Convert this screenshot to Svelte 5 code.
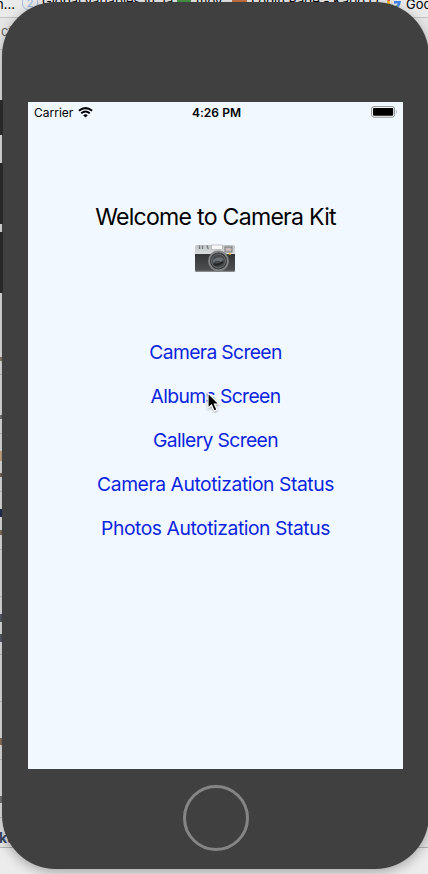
<script>
  const actions = [
    { label: 'Camera Screen', tracking: -0.65 },
    { label: 'Albums Screen', tracking: -0.6 },
    { label: 'Gallery Screen', tracking: -0.64 },
    { label: 'Camera Autotization Status', tracking: -0.44 },
    { label: 'Photos Autotization Status', tracking: -0.44 }
  ];
  const rules = [49, 374, 433, 491, 549, 596, 654, 701, 759, 817];
  const edges = [
    { y: 357, h: 4, c: '#8f8272' },
    { y: 415, h: 4, c: '#777' },
    { y: 451, h: 10, c: '#c9ab80' },
    { y: 473, h: 4, c: '#776b5f' },
    { y: 509, h: 8, c: '#263050' },
    { y: 530, h: 5, c: '#82705e' },
    { y: 614, h: 8, c: '#555b65' },
    { y: 634, h: 8, c: '#555b65' },
    { y: 738, h: 7, c: '#8b745d' },
    { y: 796, h: 7, c: '#777' }
  ];
</script>

<main class="desktop">
  <div class="browser">
    <div class="tabs"></div>
    <span class="bit" style="left:-4px;top:-4px">n...</span>
    <span class="seal">2</span>
    <span class="bit" style="left:42px;top:-7px">Global variables in Ja...</span>
    <i class="green"></i>
    <span class="bit" style="left:196px;top:-7px">moy</span>
    <i class="orange"></i>
    <span class="bit" style="left:251px;top:-7px">Login Page - Kario Q...</span>
    <svg class="google" viewBox="0 0 14 14" width="14" height="14" fill="none" stroke-width="2.5">
      <path d="M1.5 6A5.6 5.6 0 0 1 11 2.7" stroke="#ea4335" />
      <path d="M1.5 6A5.6 5.6 0 0 0 3.6 11.4" stroke="#fbbc05" />
      <path d="M3.6 11.4A5.6 5.6 0 0 0 10.5 11.2" stroke="#34a853" />
      <path d="M7 7.2H12.5Q12.2 10 10.5 11.2" stroke="#4285f4" />
    </svg>
    <span class="bit" style="left:406px;top:-4px">Goo</span>
    <span class="bit pale" style="left:1px;top:23px">ct</span>
    {#each rules as y}<i class="rule" style="top:{y}px"></i>{/each}
    {#each edges as e}<i class="edge" style="top:{e.y}px;height:{e.h}px;background:{e.c}"></i>{/each}
    <span class="bit bold" style="left:-1px;top:830px">ku</span>
    <div class="footer"></div>
  </div>

  <div class="phone">
    <div class="screen">
      <div class="status">
        <div class="left">
          <span>Carrier</span>
          <svg width="15" height="11" viewBox="0 0 15 11" fill="none" stroke="#000">
            <path d="M.9 3.8Q7.5-1.6 14.1 3.8" stroke-width="2" />
            <path d="M3.2 6.3Q7.5 2.7 11.8 6.3" stroke-width="1.8" />
            <path d="M5.2 8.2Q7.5 6.4 9.8 8.2L7.5 10.6Z" fill="#000" stroke="none" />
          </svg>
        </div>
        <strong>4:26 PM</strong>
        <svg class="battery" width="27" height="12" viewBox="0 0 27 12">
          <rect x=".6" y=".6" width="23" height="10.6" rx="2.4" fill="#fff" stroke="#8b9093" />
          <rect x="2" y="2" width="20.2" height="7.8" rx="1" />
          <path d="M25 4q1.5 1.9 0 3.8z" fill="#8b9093" />
        </svg>
      </div>

      <h1>Welcome to Camera Kit</h1>
      <svg class="camera" width="42" height="29" viewBox="0 0 42 29">
        <defs>
          <linearGradient id="metal" x2="0" y2="1"><stop stop-color="#bfc3c4" /><stop offset="1" stop-color="#dcdfe0" /></linearGradient>
          <linearGradient id="leather" x2="0" y2="1"><stop stop-color="#333536" /><stop offset="1" stop-color="#515253" /></linearGradient>
        </defs>
        <path d="M1 3Q1 1 3 1H39Q41 1 41 3V11H1Z" fill="url(#metal)" />
        <path d="M1 10H41V26Q41 28 39 28H3Q1 28 1 26Z" fill="url(#leather)" />
        <path d="M1 26.8H41V27Q41 28 39 28H3Q1 28 1 27Z" fill="#85898a" />
        <path d="M5.5 1.5V5M8.5 1.5V5M13 1.5L14.2 5" stroke="#777b7d" stroke-width="1.3" />
        <rect x="17.5" y="1" width="11" height="4.5" fill="#f7f7f5" stroke="#a4a7a8" stroke-width=".6" />
        <rect x="31" y="3" width="7" height="5" fill="#c6bab8" stroke="#77797b" />
        <rect x="34.5" y="9" width="2.5" height="1.6" fill="#f3c748" />
        <circle cx="24.5" cy="17" r="10.5" fill="#77797a" />
        <circle cx="24.5" cy="17" r="9" fill="#353738" stroke="#9a9d9e" stroke-width=".8" />
        <circle cx="24.5" cy="17" r="7" fill="#45494b" stroke="#6a6e70" />
        <path d="M19 16Q25 11 30 15L27 18Q23 15 19 19Z" fill="#6b7275" />
        <path d="M20 20Q24 22 29 18" fill="none" stroke="#202324" stroke-width="2" />
      </svg>

      <nav>
        {#each actions as action}
          <button type="button" style="letter-spacing:{action.tracking}px">{action.label}</button>
        {/each}
      </nav>
    </div>
    <div class="home"></div>
  </div>

  <i class="side" style="top:100px;height:35px"></i>
  <i class="side" style="top:163px;height:61px"></i>
  <i class="side" style="top:232px;height:61px"></i>

  <svg class="cursor" width="16" height="22" viewBox="0 0 16 22">
    <path d="M2 1V16.2L5.5 13 8.2 19 11 17.8 8.4 12H13Z" fill="#000" stroke="#fff" stroke-width="1.2" />
  </svg>
</main>

<style>
  .desktop {
    position: relative;
    width: 428px;
    height: 874px;
    overflow: hidden;
    padding: 2px 0 0 2px;
    box-sizing: border-box;
    font-family: Inter, "Liberation Sans", sans-serif;
    color: #000;
  }
  .browser { position: absolute; inset: 0; background: #e6e6e7; }
  .tabs { height: 17px; background: #eaeaeb; border-bottom: 1px solid #c4c4c5; }
  .bit { position: absolute; font-size: 13px; line-height: 16px; white-space: nowrap; }
  .pale { color: #666; }
  .bold { color: #344761; font-weight: 700; font-size: 14px; }
  .seal {
    position: absolute; left: 22px; top: -5px; width: 14px; height: 13px;
    border: 1px solid #a3bddd; border-radius: 6px; color: #91b3dd;
    font-size: 11px; line-height: 15px; text-align: center;
  }
  .green { position: absolute; left: 177px; top: 0; width: 14px; height: 4px; background: #489746; }
  .orange { position: absolute; left: 232px; top: 0; width: 15px; height: 4px; background: #c77344; }
  .google { position: absolute; left: 387px; top: -5px; }
  .rule { position: absolute; left: 0; width: 8px; height: 1px; background: #c5c6c7; }
  .edge { position: absolute; left: 0; width: 2px; }
  .footer {
    position: absolute; left: 0; right: 0; bottom: 0; height: 26px;
    border-top: 1px solid #b4b4b5; background: #ececed;
  }
  .side { position: absolute; left: 0; width: 3px; background: #29272a; }
  .phone {
    position: relative;
    width: 427px;
    height: 867px;
    box-sizing: border-box;
    padding: 100px 26px 0;
    border-radius: 54px;
    background: #404040;
    box-shadow: 0 3px 12px rgba(0, 0, 0, .3);
  }
  .screen {
    display: flex; flex-direction: column; align-items: center;
    width: 375px; height: 667px; background: #f1f8ff;
  }
  .status {
    display: grid; grid-template-columns: 1fr auto 1fr; align-items: center;
    width: 100%; height: 20px; padding: 0 5px 0 6px; box-sizing: border-box;
    font-size: 12px;
  }
  .left { display: flex; align-items: center; gap: 5px; }
  .status strong { font-weight: 600; padding-left: 1px; letter-spacing: .05px; }
  .battery { justify-self: end; }
  h1 {
    margin: 80px 0 0; font-size: 23.1px; line-height: 30px; font-weight: 400;
    letter-spacing: -.74px; white-space: nowrap;
  }
  .camera { margin: 12px 1px 0 0; }
  nav { display: flex; flex-direction: column; align-items: center; margin-top: 57px; }
  button {
    height: 44px; padding: 0; border: 0; background: none;
    font-family: inherit; font-size: 19.3px; line-height: 44px; color: #0b24df; white-space: nowrap;
  }
  .home {
    width: 66px; height: 66px; box-sizing: border-box; margin: 16px auto 0;
    border: 3px solid #858585; border-radius: 50%;
  }
  .cursor { position: absolute; left: 206px; top: 392px; filter: drop-shadow(0 1px 1px rgba(0, 0, 0, .35)); }
</style>
